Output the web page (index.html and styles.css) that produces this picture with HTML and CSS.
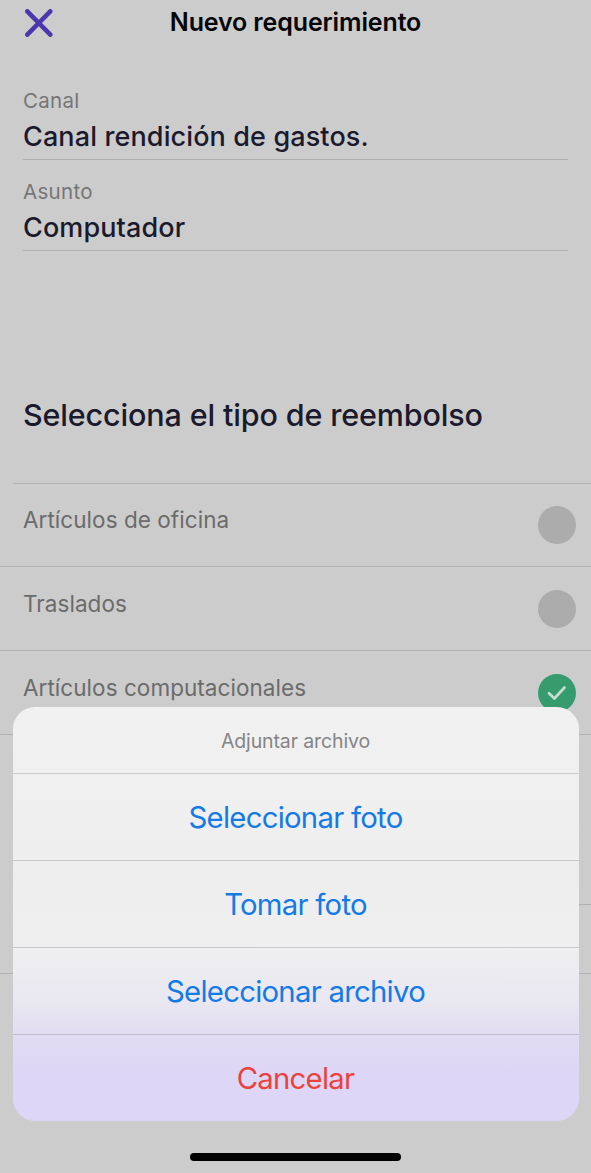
FILE: index.html
```html
<!DOCTYPE html>
<html lang="es">
<head>
<meta charset="utf-8">
<title>Nuevo requerimiento</title>
<link rel="stylesheet" href="styles.css">
</head>
<body>
<main class="screen">
  <header class="topbar">
    <svg class="close" viewBox="0 0 28 28"><path d="M2.3 2.3 25.3 25.7M25.3 2.3 2.3 25.7"/></svg>
    <h1 class="title">Nuevo requerimiento</h1>
  </header>
  <section class="fields">
    <div class="field"><span class="label">Canal</span><span class="value">Canal rendición de gastos.</span></div>
    <div class="field"><span class="label">Asunto</span><span class="value">Computador</span></div>
  </section>
  <h2 class="heading">Selecciona el tipo de reembolso</h2>
  <ul class="options">
    <li class="option"><span>Artículos de oficina</span><i class="radio"></i></li>
    <li class="option"><span>Traslados</span><i class="radio"></i></li>
    <li class="option"><span>Artículos computacionales</span><svg class="radio checked" viewBox="0 0 38 38"><path d="M11 19.3 16.4 24.5 26.5 13.5"/></svg></li>
  </ul>
  <div class="section-end"></div>
  <div class="section-line"></div>
</main>
<div class="sheet">
  <div class="sheet-title">Adjuntar archivo</div>
  <div class="action">Seleccionar foto</div>
  <div class="action">Tomar foto</div>
  <div class="action">Seleccionar archivo</div>
  <div class="action cancel">Cancelar</div>
</div>
<div class="home"></div>
</body>
</html>
```
FILE: styles.css
```css
* { box-sizing: border-box; margin: 0; padding: 0; }
body {
  position: relative;
  height: 1173px;
  overflow: hidden;
  background: #cccccc;
  font-family: Inter, "Liberation Sans", sans-serif;
  color: #1b1a2c;
}
.screen { display: flex; flex-direction: column; }
.topbar { display: grid; grid-template-columns: 82px 1fr 82px; align-items: center; height: 45px; }
.close { width: 28px; height: 28px; margin-left: 25px; fill: none; stroke: #4c36ad; stroke-width: 4.5; stroke-linecap: round; }
.title { margin-top: -2px; font-size: 25px; line-height: 30px; font-weight: 600; text-align: center; color: #050505; letter-spacing: -.13px; white-space: nowrap; }
.fields { padding: 24px 23px 0; }
.field { display: flex; flex-direction: column; height: 91px; border-bottom: 1px solid #b1b1b1; padding-top: 19px; white-space: nowrap; }
.label { font-size: 20.5px; line-height: 26px; letter-spacing: .3px; color: #767676; }
.value { font-size: 27px; line-height: 34px; font-weight: 500; margin-top: 6px; letter-spacing: .12px; }
.heading { margin: 144px 23px 0; font-size: 30.5px; line-height: 40px; font-weight: 500; letter-spacing: -.15px; white-space: nowrap; }
.options { list-style: none; margin-top: 48px; }
.option { display: flex; justify-content: space-between; align-items: flex-start; height: 84px; padding: 22px 15px 0 23px; border-bottom: 1px solid #b1b1b1; font-size: 22.5px; line-height: 30px; letter-spacing: .05px; color: #6b6b6b; white-space: nowrap; }
.option:first-child { background: linear-gradient(#b1b1b1, #b1b1b1) 13px 0 / 100% 1px no-repeat; }
.radio { width: 38px; height: 38px; margin-top: .6px; border-radius: 50%; background: #acacac; }
.checked { background: #369c6d; fill: none; stroke: #c5dccf; stroke-width: 2.7; stroke-linecap: round; stroke-linejoin: round; }
.section-end { height: 170px; margin-left: 13px; border-bottom: 1px solid #b1b1b1; }
.section-line { height: 69px; border-bottom: 1px solid #b1b1b1; }
.sheet {
  position: absolute; left: 12.5px; top: 707px; width: 566px; height: 414px;
  border-radius: 22px; overflow: hidden; text-align: center; white-space: nowrap;
  background: linear-gradient(#f1f1f1 0, #eeeeef 40%, #efeff0 58%, #e9e7f0 71%, #e1dcf3 80%, #ddd6f6 88%, #ddd6f7 100%);
}
.sheet-title { height: 67px; border-bottom: 1px solid #cbcbcd; padding-top: 21px; font-size: 19.5px; line-height: 26px; letter-spacing: -.12px; color: #858585; }
.action { height: 87px; border-bottom: 1px solid rgba(70,65,85,.22); padding-top: 24px; font-size: 29.3px; line-height: 40px; letter-spacing: -.73px; color: #147ae5; }
.cancel { color: #eb423d; border: 0; }
.home { position: absolute; left: 190px; top: 1153px; width: 211px; height: 8px; border-radius: 4px; background: #000; }
```
